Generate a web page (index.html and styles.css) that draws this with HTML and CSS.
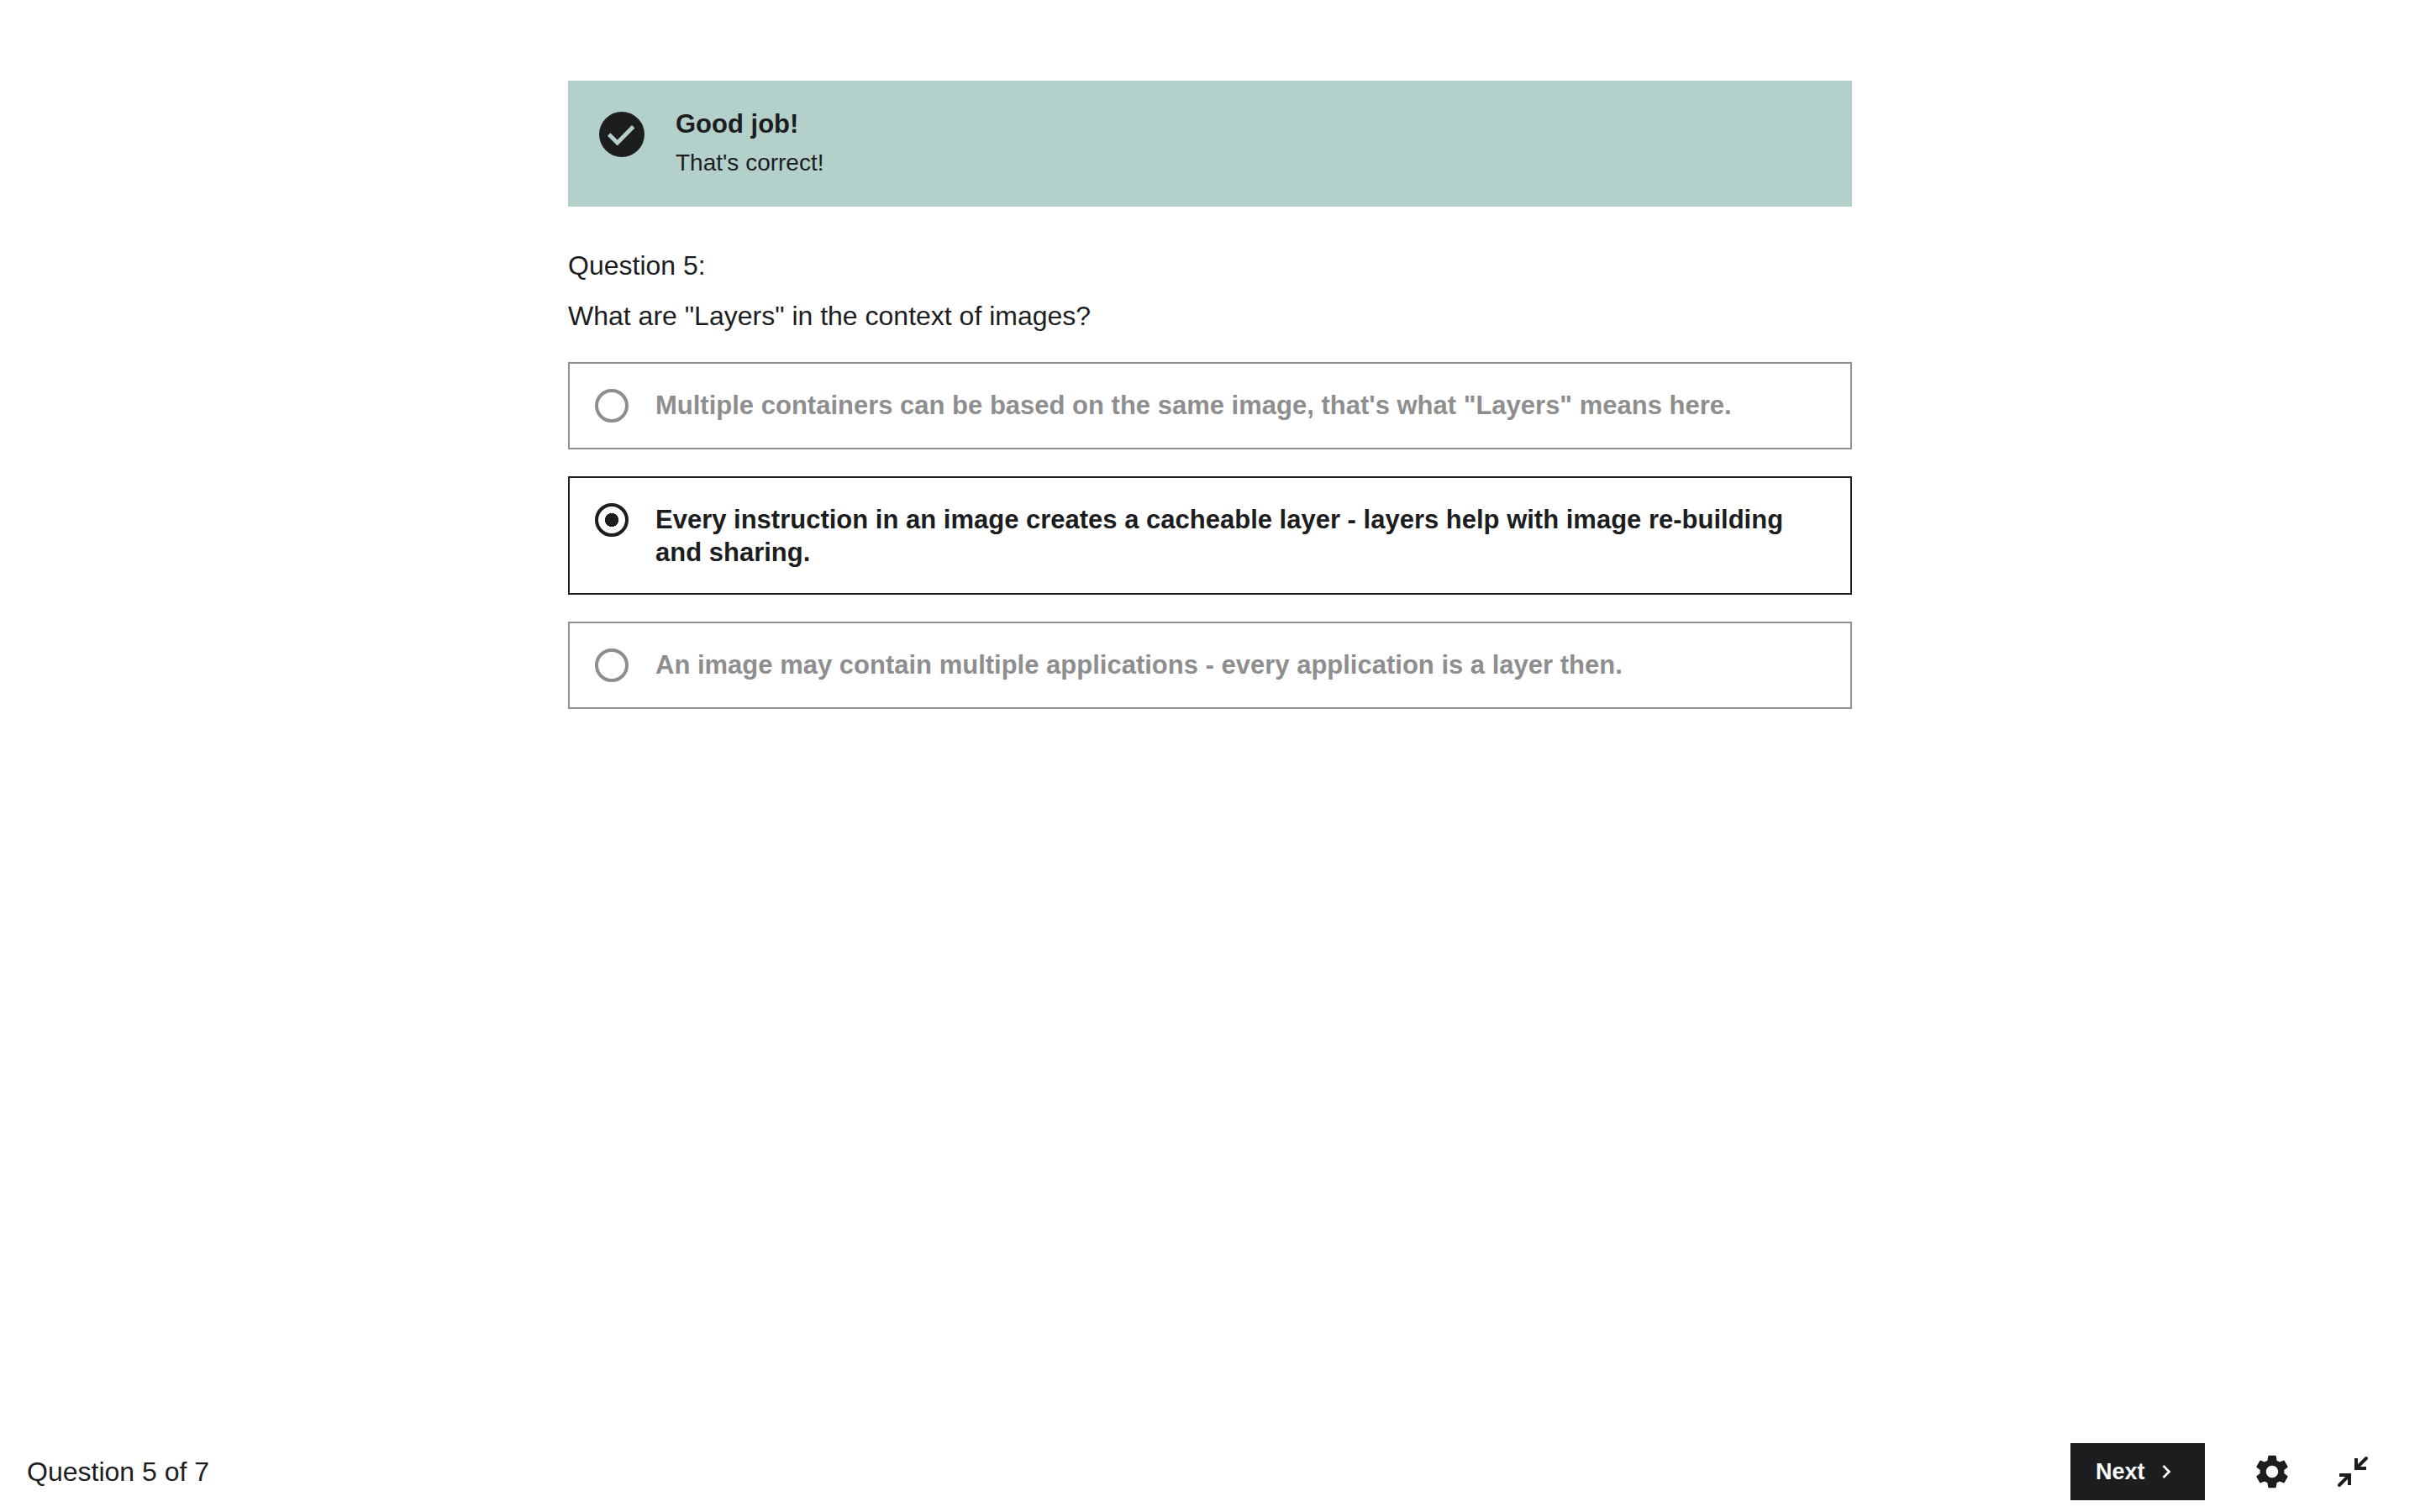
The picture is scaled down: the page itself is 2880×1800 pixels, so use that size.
FILE: index.html
```html
<!DOCTYPE html>
<html lang="en">
<head>
<meta charset="utf-8">
<meta name="viewport" content="width=device-width, initial-scale=1">
<title>Quiz - Question 5 of 7</title>
<link rel="stylesheet" href="styles.css">
</head>
<body>
<main class="quiz">
  <section class="feedback" role="status">
    <svg class="feedback-icon" viewBox="0 0 54 54" aria-hidden="true">
      <circle cx="27" cy="27" r="27" fill="#1c1d1f"/>
      <path d="M11.700 27 21.700 37 40.700 17.700" fill="none" stroke="#b4d0cb" stroke-width="4.800"/>
    </svg>
    <div class="feedback-text">
      <h2 class="feedback-title">Good job!</h2>
      <p class="feedback-message">That's correct!</p>
    </div>
  </section>
  <form class="question">
    <p class="question-number">Question 5:</p>
    <p class="question-prompt" id="prompt">What are "Layers" in the context of images?</p>
    <div class="answers" role="radiogroup" aria-labelledby="prompt">
      <label class="answer answer-disabled">
        <input class="answer-radio" type="radio" name="answer" disabled>
        <span class="answer-text">Multiple containers can be based on the same image, that's what "Layers" means here.</span>
      </label>
      <label class="answer">
        <input class="answer-radio" type="radio" name="answer" checked>
        <span class="answer-text">Every instruction in an image creates a cacheable layer - layers help with image re-building and sharing.</span>
      </label>
      <label class="answer answer-disabled">
        <input class="answer-radio" type="radio" name="answer" disabled>
        <span class="answer-text">An image may contain multiple applications - every application is a layer then.</span>
      </label>
    </div>
  </form>
</main>
<footer class="bar">
  <p class="progress">Question 5 of 7</p>
  <div class="controls">
    <button class="next" type="button">Next
      <svg class="next-icon" viewBox="0 0 32 32" aria-hidden="true"><path d="M12.500 9 19.500 16 12.500 23" fill="none" stroke="currentColor" stroke-width="2.700"/></svg>
    </button>
    <button class="icon-button" type="button" aria-label="Settings">
      <svg class="icon" viewBox="0 0 24 24" aria-hidden="true"><path fill="currentColor" d="M19.140 12.940c.04-.3.060-.61.060-.94 0-.32-.02-.64-.07-.94l2.030-1.580c.18-.14.230-.41.120-.61l-1.920-3.320c-.12-.22-.37-.29-.59-.22l-2.390.96c-.5-.38-1.030-.7-1.620-.94l-.36-2.540c-.04-.24-.24-.41-.48-.41h-3.840c-.24 0-.43.170-.47.410l-.36 2.540c-.59.240-1.130.570-1.620.940l-2.390-.96c-.22-.08-.47 0-.59.220L2.740 8.870c-.12.210-.08.470.120.610l2.030 1.580c-.05.300-.09.630-.09.940s.020.640.070.940l-2.030 1.580c-.18.140-.23.410-.12.610l1.920 3.320c.120.220.370.290.590.220l2.390-.96c.500.380 1.030.700 1.620.940l.36 2.540c.050.240.240.410.480.410h3.840c.240 0 .440-.17.470-.41l.36-2.540c.590-.24 1.130-.56 1.620-.94l2.390.96c.220.080.470 0 .590-.22l1.920-3.320c.120-.22.070-.47-.12-.61l-2.010-1.580zM12 15.600c-1.980 0-3.600-1.620-3.600-3.600s1.620-3.600 3.600-3.600 3.600 1.620 3.600 3.600-1.620 3.600-3.600 3.600z"/></svg>
    </button>
    <button class="icon-button" type="button" aria-label="Exit fullscreen">
      <svg class="icon" viewBox="0 0 48 48" aria-hidden="true"><g fill="none" stroke="currentColor" stroke-width="4"><path d="M28 8v12h12M8 28h12v12"/><path stroke-linecap="round" d="M28 20 40 8M20 28 8 40"/></g></svg>
    </button>
  </div>
</footer>
</body>
</html>
```
FILE: styles.css
```css
* { box-sizing: border-box; }

body {
  display: flex;
  flex-direction: column;
  min-height: 100vh;
  margin: 0;
  background: #fff;
  color: #1c1d1f;
  font-family: "Liberation Sans", Arial, sans-serif;
  font-size: 32px;
  line-height: 44px;
}

h2, p { margin: 0; }

.quiz {
  flex: 1;
  width: 100%;
  max-width: 1592px;
  margin: 0 auto;
  padding: 96px 32px 32px;
}

.feedback {
  display: flex;
  gap: 37px;
  min-height: 150px;
  padding: 32px 37px;
  background: #b4d0cb;
}

.feedback-icon {
  flex: none;
  width: 54px;
  height: 54px;
  margin-top: 5px;
}

.feedback-title {
  font-size: 31px;
  line-height: 39px;
}

.feedback-message {
  margin-top: 7px;
  font-size: 28px;
  line-height: 40px;
}

.question-number { margin-top: 48px; }

.question-prompt { margin-top: 16px; }

.answers {
  display: grid;
  gap: 32px;
  margin-top: 33px;
}

.answer {
  display: flex;
  align-items: flex-start;
  gap: 32px;
  padding: 30px 30px 29px;
  border: 2px solid #1c1d1f;
  font-size: 31px;
  font-weight: 700;
  line-height: 39px;
}

.answer-disabled {
  padding-bottom: 30px;
  border-color: #8e8e8f;
  color: #8e8e8f;
}

.answer-radio {
  flex: none;
  appearance: none;
  width: 40px;
  height: 40px;
  margin: 0;
  border: 4px solid currentColor;
  border-radius: 50%;
  color: inherit;
}

.answer-radio:checked {
  background: radial-gradient(circle, currentColor 8px, transparent 8px);
}

.bar {
  display: flex;
  align-items: center;
  justify-content: space-between;
  padding: 14px 56px 14px 32px;
}

.controls {
  display: flex;
  align-items: center;
  gap: 48px;
}

.next {
  display: flex;
  align-items: center;
  justify-content: space-between;
  width: 160px;
  height: 68px;
  margin-right: 8px;
  padding: 0 30px;
  border: 0;
  background: #1c1d1f;
  color: #fff;
  font: 700 27px/40px "Liberation Sans", Arial, sans-serif;
}

.next-icon {
  width: 32px;
  height: 32px;
}

.icon-button {
  display: flex;
  padding: 0;
  border: 0;
  background: none;
  color: inherit;
}

.icon {
  width: 48px;
  height: 48px;
}
```
